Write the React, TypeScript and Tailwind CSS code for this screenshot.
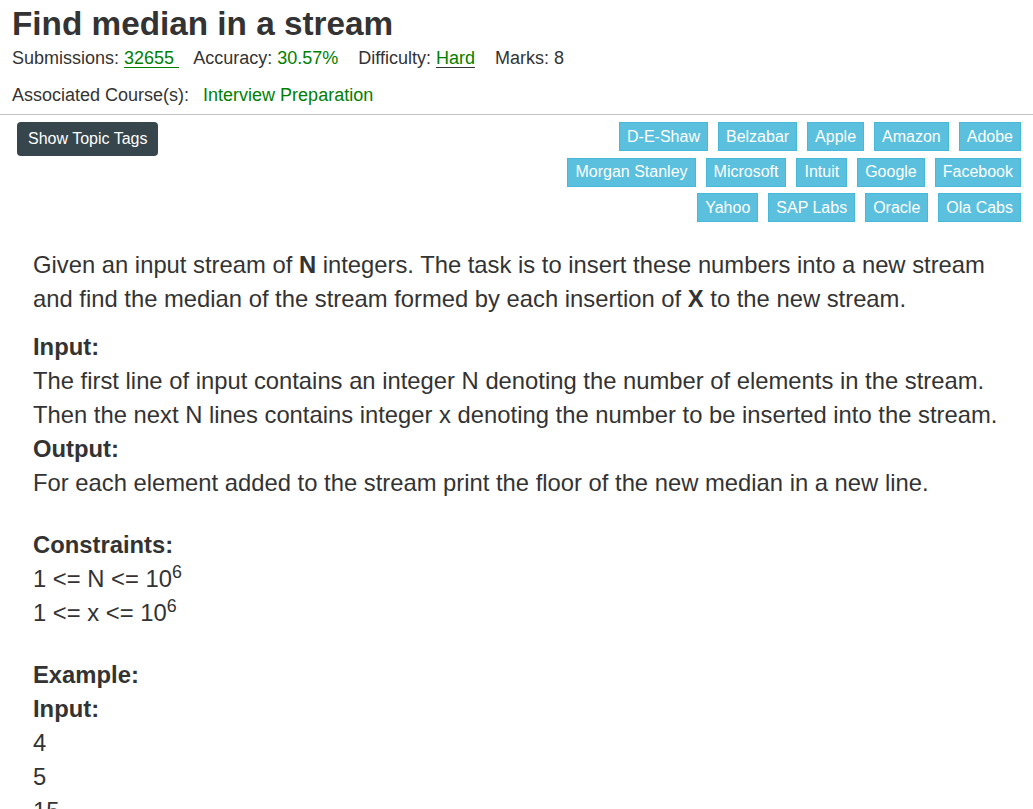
const tagRows = [
  ["D-E-Shaw", "Belzabar", "Apple", "Amazon", "Adobe"],
  ["Morgan Stanley", "Microsoft", "Intuit", "Google", "Facebook"],
  ["Yahoo", "SAP Labs", "Oracle", "Ola Cabs"],
];

const Tag = ({ name }: { name: string }) => (
  <span className="flex h-[29px] items-center border border-[#46b8da] bg-[#5bc0de] px-[7px] text-[16px] text-white">
    {name}
  </span>
);

const App = () => {
  return (
    <div className="min-h-screen bg-white text-[#333] font-['Liberation_Sans',Arial,sans-serif]">
      {/* Header */}
      <div className="px-[12px] pt-[6px]">
        <h1 className="text-[33.3px] font-bold leading-[35px]">Find median in a stream</h1>
        <div className="mt-[5px] text-[18px] leading-[24px]">
          Submissions:{" "}
          <a className="text-[#008000] underline underline-offset-[3px]">32655&nbsp;</a>
          <span className="ml-[14px]">Accuracy: </span>
          <span className="text-[#008000]">30.57%</span>
          <span className="ml-[20px]">Difficulty: </span>
          <a className="text-[#008000] underline decoration-[#333] underline-offset-[3px]">Hard</a>
          <span className="ml-[20px]">Marks: 8</span>
        </div>
        <div className="mt-[13px] text-[18px] leading-[24px]">
          Associated Course(s):
          <span className="ml-[14px] text-[#008000]">Interview Preparation</span>
        </div>
      </div>
      <hr className="mt-[7px] border-t border-[#c4c4c4]" />

      {/* Button + company tags */}
      <div className="mt-[7px] flex items-start justify-between pl-[17px] pr-[12px]">
        <button className="h-[34px] rounded-[4px] bg-[#37454c] px-[11px] text-[16px] text-white">
          Show Topic Tags
        </button>
        <div className="flex flex-col items-end gap-[6.5px]">
          {tagRows.map((row, i) => (
            <div key={i} className="flex gap-[10px]">
              {row.map((t) => (
                <Tag key={t} name={t} />
              ))}
            </div>
          ))}
        </div>
      </div>

      {/* Problem statement */}
      <div className="mt-[26px] pl-[33px] pr-[10px] text-[23.8px] leading-[34px] whitespace-nowrap">
        <p>
          Given an input stream of <strong>N</strong> integers. The task is to insert these numbers into a new stream
          <br />
          and find the median of the stream formed by each insertion of <strong>X</strong> to the new stream.
        </p>
        <p className="mt-[14px]">
          <strong>Input:</strong>
          <br />
          The first line of input contains an integer N denoting the number of elements in the stream.
          <br />
          Then the next N lines contains integer x denoting the number to be inserted into the stream.
          <br />
          <strong>Output:</strong>
          <br />
          For each element added to the stream print the floor of the new median in a new line.
        </p>
        <p className="mt-[28px]">
          <strong>Constraints:</strong>
          <br />
          1 &lt;= N &lt;= 10<sup>6</sup>
          <br />
          1 &lt;= x &lt;= 10<sup>6</sup>
        </p>
        <p className="mt-[28px]">
          <strong>Example:</strong>
          <br />
          <strong>Input:</strong>
          <br />
          4
          <br />
          5
          <br />
          15
          <br />
          1
          <br />
          3
        </p>
      </div>
    </div>
  );
};

export default App;
